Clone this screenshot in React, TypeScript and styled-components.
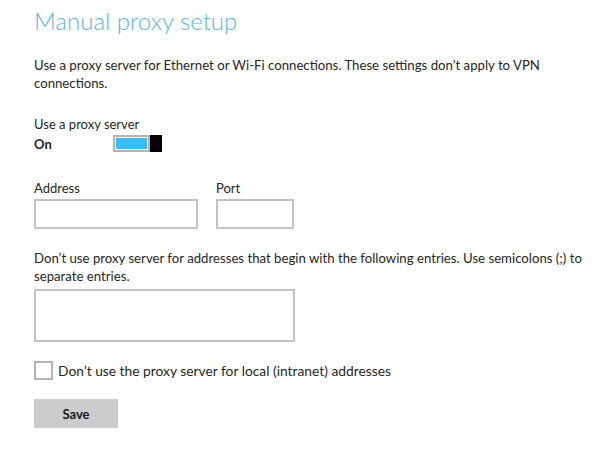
import styled, { createGlobalStyle } from 'styled-components';

const Global = createGlobalStyle`
  body {
    margin: 0;
    background: #fff;
    font-family: Lato, 'Open Sans', Arial, sans-serif;
    color: #262626;
  }
`;

const Page = styled.div`
  padding: 5px 0 0 34px;
  display: flex;
  flex-direction: column;
  align-items: flex-start;
`;

const Title = styled.h1`
  margin: 0;
  font-weight: 300;
  font-size: 24px;
  line-height: 32px;
  color: #5ab4e8;
`;

const Text = styled.p<{ $top?: number }>`
  margin: ${(p) => p.$top ?? 0}px 0 0 0;
  width: 562px;
  font-size: 13.2px;
  line-height: 18px;
`;

const Label = styled.div<{ $top?: number }>`
  margin-top: ${(p) => p.$top ?? 0}px;
  font-size: 13px;
  line-height: 18px;
`;

const ToggleRow = styled.div`
  display: flex;
  align-items: center;
  margin-top: 2px;
`;

const State = styled.span`
  width: 79px;
  font-size: 13px;
  font-weight: 700;
`;

const Toggle = styled.div`
  display: flex;
  align-items: center;
`;

const Track = styled.div`
  width: 31px;
  height: 11px;
  border: 2px solid #b4b4b4;
  padding: 1px;
  background: #fff;
  display: flex;
`;

const Fill = styled.div`
  flex: 1;
  background: #3bbcf8;
`;

const Thumb = styled.div`
  width: 12px;
  height: 17px;
  background: #000;
`;

const FieldRow = styled.div`
  display: flex;
  gap: 18px;
  margin-top: 27px;
`;

const Field = styled.div`
  display: flex;
  flex-direction: column;
  gap: 2px;
`;

const Input = styled.div<{ $w: number; $h: number }>`
  width: ${(p) => p.$w}px;
  height: ${(p) => p.$h}px;
  box-sizing: border-box;
  border: 2px solid #c3c3c3;
  background: #fff;
`;

const Box = styled(Input)`
  margin-top: 4px;
`;

const CheckRow = styled.label`
  display: flex;
  align-items: center;
  gap: 5px;
  margin-top: 19px;
  font-size: 13.8px;
`;

const Check = styled.span`
  width: 19px;
  height: 19px;
  box-sizing: border-box;
  border: 2px solid #b4b4b4;
  background: #fff;
`;

const Button = styled.button`
  margin-top: 19px;
  width: 84px;
  height: 29px;
  border: none;
  background: #cccccc;
  font-family: inherit;
  font-size: 13px;
  font-weight: 700;
  color: #1a1a1a;
  padding: 0;
`;

export default function App() {
  return (
    <>
      <Global />
      <Page>
        <Title>Manual proxy setup</Title>
        <Text $top={19}>
          Use a proxy server for Ethernet or Wi-Fi connections. These settings don’t apply to VPN
          connections.
        </Text>
        <Label $top={23}>Use a proxy server</Label>
        <ToggleRow>
          <State>On</State>
          <Toggle>
            <Track>
              <Fill />
            </Track>
            <Thumb />
          </Toggle>
        </ToggleRow>
        <FieldRow>
          <Field>
            <Label>Address</Label>
            <Input $w={164} $h={30} />
          </Field>
          <Field>
            <Label>Port</Label>
            <Input $w={78} $h={30} />
          </Field>
        </FieldRow>
        <Text $top={20}>
          Don’t use proxy server for addresses that begin with the following entries. Use semicolons (;) to
          separate entries.
        </Text>
        <Box $w={261} $h={53} />
        <CheckRow>
          <Check />
          Don’t use the proxy server for local (intranet) addresses
        </CheckRow>
        <Button>Save</Button>
      </Page>
    </>
  );
}
